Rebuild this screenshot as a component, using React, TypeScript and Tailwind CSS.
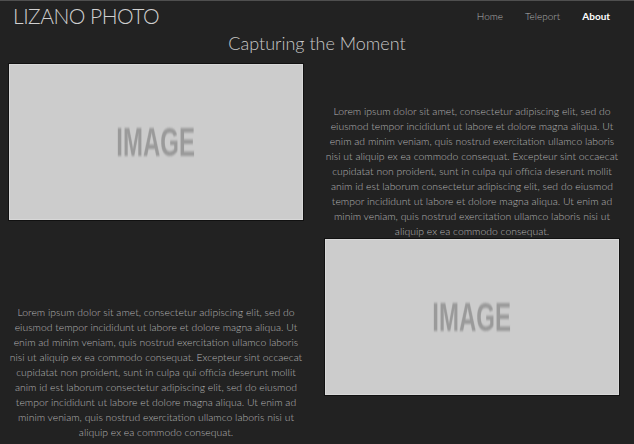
import React from 'react';

const lorem =
  'Lorem ipsum dolor sit amet, consectetur adipiscing elit, sed do eiusmod tempor incididunt ut labore et dolore magna aliqua. Ut enim ad minim veniam, quis nostrud exercitation ullamco laboris nisi ut aliquip ex ea commodo consequat. Excepteur sint occaecat cupidatat non proident, sunt in culpa qui officia deserunt mollit anim id est laborum consectetur adipiscing elit, sed do eiusmod tempor incididunt ut labore et dolore magna aliqua. Ut enim ad minim veniam, quis nostrud exercitation ullamco laboris nisi ut aliquip ex ea commodo consequat.';

function Placeholder() {
  return (
    <div className="w-[296px] h-[158px] bg-[#cccccc] border border-[#111] shadow-[inset_0_0_0_1px_#d8d8d8] flex items-center justify-center overflow-hidden">
      <span className="font-['Liberation_Sans',sans-serif] font-bold text-[40px] leading-none text-[#9a9a9a] scale-x-[0.6] blur-[0.8px] select-none">
        IMAGE
      </span>
    </div>
  );
}

function Blurb() {
  return (
    <p className="w-[296px] text-center text-[10.4px] leading-[15px] text-[#b4b4b4] font-light">
      {lorem}
    </p>
  );
}

export default function App() {
  const links = [
    { label: 'Home', active: false },
    { label: 'Teleport', active: false },
    { label: 'About', active: true },
  ];

  return (
    <div className="w-[634px] h-[444px] overflow-hidden bg-[#222222] border-t border-[#4f4f4f] font-['Lato',sans-serif]">
      <header className="h-[29px] flex items-center justify-between">
        <h1 className="pl-[13px] text-[21px] leading-none font-light text-[#d0d0d0] tracking-[-0.5px]">LIZANO PHOTO</h1>
        <nav className="flex gap-[22px] pr-[24px] pt-[1px] text-[10px]">
          {links.map(l => (
            <a
              key={l.label}
              className={l.active ? 'text-white font-bold' : 'text-[#b0b0b0] font-light'}
            >
              {l.label}
            </a>
          ))}
        </nav>
      </header>

      <h2 className="h-[26px] text-center text-[18px] leading-[26px] font-light text-[#c8c8c8]">
        Capturing the Moment
      </h2>

      <div className="grid grid-cols-2">
        <div className="pl-[8px] pt-[7px] flex flex-col">
          <Placeholder />
          <div className="mt-[84px]">
            <Blurb />
          </div>
        </div>
        <div className="pl-[7px] pt-[48px] flex flex-col">
          <Blurb />
          <div className="-mt-[1px]">
            <Placeholder />
          </div>
        </div>
      </div>
    </div>
  );
}
